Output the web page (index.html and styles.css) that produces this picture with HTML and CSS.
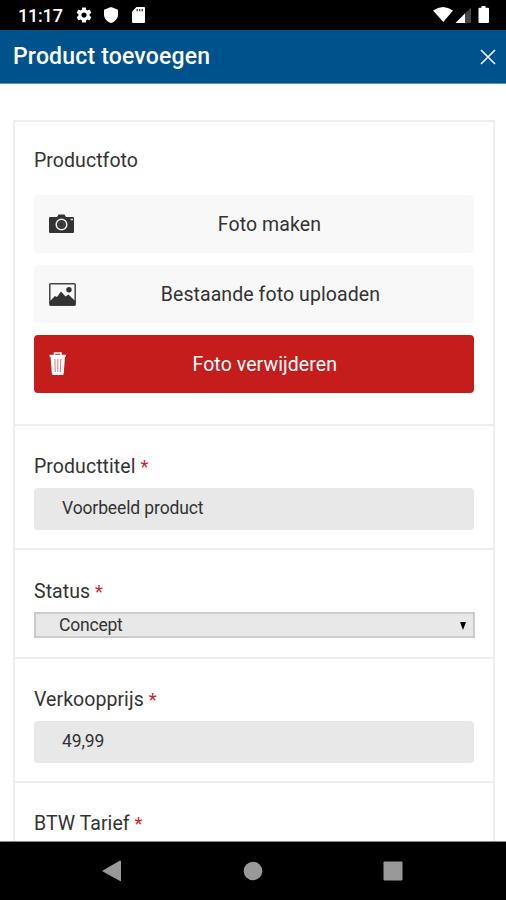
FILE: index.html
```html
<!DOCTYPE html>
<html lang="nl">
<head>
<meta charset="utf-8">
<title>Product toevoegen</title>
<link rel="stylesheet" href="styles.css">
</head>
<body>
<div class="statusbar">
  <span class="clock">11:17</span>
  <svg class="gear" width="18" height="18" viewBox="0 0 24 24"><path fill="#fff" d="M19.43 12.98c.04-.32.07-.64.07-.98s-.03-.66-.07-.98l2.11-1.65c.19-.15.24-.42.12-.64l-2-3.46c-.12-.22-.39-.3-.61-.22l-2.49 1c-.52-.4-1.08-.73-1.69-.98l-.38-2.65C14.46 2.18 14.25 2 14 2h-4c-.25 0-.46.18-.49.42l-.38 2.65c-.61.25-1.17.59-1.69.98l-2.49-1c-.23-.09-.49 0-.61.22l-2 3.46c-.13.22-.07.49.12.64l2.11 1.65c-.04.32-.07.65-.07.98s.03.66.07.98l-2.11 1.65c-.19.15-.24.42-.12.64l2 3.46c.12.22.39.3.61.22l2.49-1c.52.4 1.08.73 1.69.98l.38 2.65c.03.24.24.42.49.42h4c.25 0 .46-.18.49-.42l.38-2.65c.61-.25 1.17-.59 1.69-.98l2.49 1c.23.09.49 0 .61-.22l2-3.46c.12-.22.07-.49-.12-.64zM12 15.500c-1.930 0-3.500-1.570-3.500-3.500s1.570-3.500 3.500-3.500 3.500 1.570 3.500 3.500-1.570 3.500-3.500 3.500z"/></svg>
  <svg class="shield" width="14" height="16" viewBox="0 0 14 16"><path fill="#fff" d="M7 0 14 2.700V7.500c0 4-2.800 7.200-7 8.500C2.800 14.700 0 11.500 0 7.500V2.700z"/></svg>
  <svg class="card-icon" width="13" height="16" viewBox="0 0 13 16"><path fill="#fff" d="M4.500 0H12a1 1 0 0 1 1 1v14a1 1 0 0 1-1 1H1a1 1 0 0 1-1-1V4.500z"/><path stroke="#333" stroke-width="1.300" d="M5.200 2v2.300M7.700 2v2.300M10.200 2v2.300"/></svg>
  <svg class="signals" width="58" height="18" viewBox="0 0 58 18"><path fill="#fff" d="M0 4.500Q10 -2.500 20 4.500L10.300 16z"/><path fill="#444" d="M22.500 17 38 1.500V17z"/><path fill="#fff" d="M22.500 17 32 7.500V17z"/><path fill="#fff" d="M48.500 0h4v1.800H55a1 1 0 0 1 1 1V16a1 1 0 0 1-1 1h-8.500a1 1 0 0 1-1-1V2.800a1 1 0 0 1 1-1h2z"/></svg>
</div>
<header class="header">
  <h1>Product toevoegen</h1>
  <svg width="16" height="16" viewBox="0 0 16 16"><path d="M1 1l14 14M15 1 1 15" stroke="#e4f1ff" stroke-width="1.700"/></svg>
</header>
<main class="content">
  <form class="form">
    <section class="photo">
      <div class="label">Productfoto</div>
      <button type="button" class="btn"><svg width="26" height="20" viewBox="0 0 26 20"><path fill="#333" d="M1 3h7l1.500-2.500h6L17 3h7a1 1 0 0 1 1 1v14a1 1 0 0 1-1 1H1a1 1 0 0 1-1-1V4a1 1 0 0 1 1-1z"/><circle cx="12.500" cy="10.500" r="5.300" fill="#333" stroke="#eee" stroke-width="1.500"/><circle cx="12.500" cy="10.500" r="2.500" fill="#333" stroke="#555" stroke-width=".8"/><path d="M21.500 5.500H24" stroke="#ddd" stroke-width="1.500"/></svg><span class="make">Foto maken</span></button>
      <button type="button" class="btn"><svg width="27" height="23" viewBox="0 0 27 23"><rect x=".8" y=".8" width="25.400" height="21.400" rx="1" fill="#f8f8f8" stroke="#444" stroke-width="1.500"/><path fill="#333" d="M1 18 6 13l2 1 4-5.500 4.500 5 3-2 3 3 3.700 3.500v4.200H1z"/><circle cx="20" cy="6.800" r="2.700" fill="#333"/></svg><span class="upload">Bestaande foto uploaden</span></button>
      <button type="button" class="btn danger"><svg width="18" height="24" viewBox="0 0 18 24"><path fill="#fff" d="M.5 2.800h16.500v2H16l-1.300 17a1.500 1.500 0 0 1-1.500 1.300H4.400A1.500 1.500 0 0 1 2.900 21.800L1.500 4.800h-1z"/><path d="M5.500 3V1h6.500v2" fill="none" stroke="#fff" stroke-width="1.400"/><path d="m5.800 7 .5 13M8.800 7v13M11.800 7l-.5 13" stroke="#dc8684" stroke-width="1.100"/></svg><span class="remove">Foto verwijderen</span></button>
    </section>
    <section class="title">
      <div class="label">Producttitel <b>*</b></div>
      <div class="input"><span class="product">Voorbeeld product</span></div>
    </section>
    <section class="status">
      <div class="label">Status <b>*</b></div>
      <div class="select"><span>Concept</span><i class="arrow"></i></div>
    </section>
    <section class="price">
      <div class="label">Verkoopprijs <b>*</b></div>
      <div class="input"><span>49,99</span></div>
    </section>
    <section class="vat">
      <div class="label">BTW Tarief <b>*</b></div>
    </section>
  </form>
</main>
<nav class="navbar">
  <svg width="20" height="22" viewBox="0 0 20 22"><path fill="#999" d="M18 .5q1 0 1 1v19q0 1-1 .5L.8 11.500q-.8-.5 0-1z"/></svg>
  <svg width="20" height="20" viewBox="0 0 20 20"><circle cx="10" cy="10" r="9.300" fill="#999"/></svg>
  <svg width="20" height="20" viewBox="0 0 20 20"><rect x=".5" y=".5" width="19" height="19" rx="1" fill="#999"/></svg>
</nav>
</body>
</html>
```
FILE: styles.css
```css
* { box-sizing: border-box; }
body {
  margin: 0;
  width: 506px;
  height: 900px;
  overflow: hidden;
  display: flex;
  flex-direction: column;
  background: #fff;
  color: #333;
  font-family: Roboto, sans-serif;
}
svg { display: block; flex: none; }
.statusbar {
  height: 30px;
  flex: none;
  display: flex;
  align-items: center;
  background: #000;
  color: #fff;
  padding-left: 18px;
}
.clock { width: 57px; font-size: 18px; font-weight: 500; line-height: 30px; letter-spacing: -.2px; padding-top: 2px; }
.shield { margin-left: 11px; }
.card-icon { margin-left: 14px; }
.signals { margin-left: auto; margin-right: 15px; }
.header {
  height: 54px;
  flex: none;
  display: flex;
  align-items: center;
  justify-content: space-between;
  padding: 0 10px 0 13px;
  background: #00528c;
  border-bottom: 1px solid #6688b4;
  color: #fff;
}
h1 { margin: 0; padding-top: 1px; font-size: 23px; font-weight: 500; line-height: 30px; letter-spacing: .18px; white-space: nowrap; }
.content { flex: 1; min-height: 0; overflow: hidden; padding: 36px 11px 0 13px; border-bottom: 1px solid #888; }
.form { border: 2px solid #eee; border-bottom: 0; }
section { padding: 0 19px; border-bottom: 2px solid #eee; }
.photo { height: 304px; padding-top: 27px; }
.title { height: 124px; padding-top: 29px; }
.status { height: 109px; padding-top: 30px; }
.price { height: 124px; padding-top: 29px; }
.vat { height: 124px; padding-top: 29px; }
.label { height: 24px; line-height: 24px; font-size: 19.5px; white-space: nowrap; letter-spacing: .06px; }
.label b { color: #d61f26; font-weight: 400; font-size: 18.5px; }
.photo .label { margin-bottom: 22px; }
.btn {
  display: flex;
  align-items: center;
  width: 440px;
  height: 58px;
  margin: 0 0 12px;
  padding: 0 0 0 15px;
  border: 0;
  border-radius: 4px;
  background: #f8f8f8;
  color: #333;
  font: 19.5px/24px Roboto, sans-serif;
  letter-spacing: .08px;
}
.btn svg { margin-right: auto; }
.btn span { white-space: nowrap; padding-top: 2px; }
.make { margin-right: 153px; }
.upload { margin-right: 94px; }
.remove { margin-right: 137px; }
.danger { background: #c41d1c; color: #fff; }
.input {
  height: 42px;
  width: 440px;
  margin-top: 9px;
  padding-left: 28px;
  border-radius: 4px;
  background: #e8e8e8;
  font-size: 17.500px;
  letter-spacing: -.12px;
  line-height: 41px;
}
.price .input { line-height: 40px; }
.select {
  display: flex;
  align-items: center;
  justify-content: space-between;
  height: 26px;
  width: 441px;
  margin-top: 8px;
  padding: 0 7px 1px 23px;
  border: 2px solid #ccc;
  background: #e8e8e8;
  font-size: 17.500px;
  letter-spacing: -.2px;
  line-height: 20px;
}
.arrow { border: 3.5px solid transparent; border-top: 8px solid #000; border-bottom: 0; margin-top: 2px; }
.navbar {
  height: 58px;
  flex: none;
  display: flex;
  align-items: center;
  justify-content: space-between;
  padding: 0 103px 0 102px;
  background: #000;
}
```
